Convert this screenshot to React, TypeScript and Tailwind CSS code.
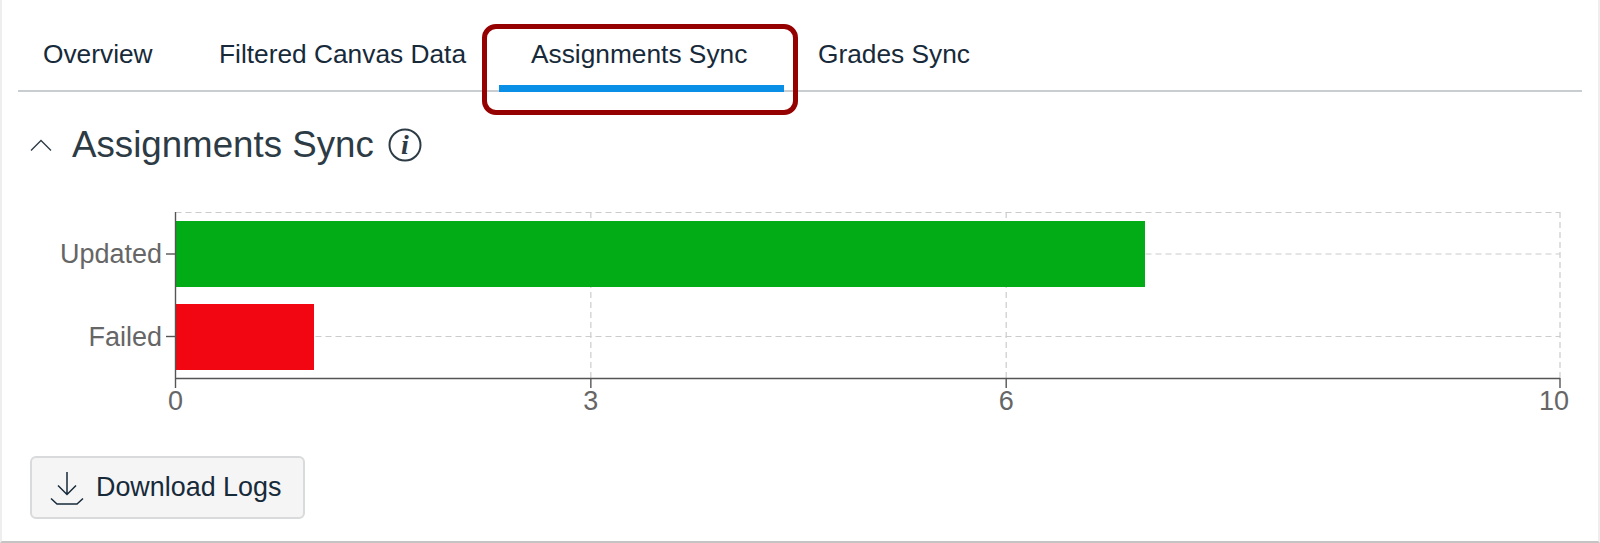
const fontStack = { fontFamily: '"Liberation Sans", Arial, sans-serif' };

const tabs = [
  { label: 'Overview', className: 'w-[201px] pl-[25px]' },
  { label: 'Filtered Canvas Data', className: 'w-[312px]' },
  { label: 'Assignments Sync', className: 'w-[287px]' },
  { label: 'Grades Sync', className: '' },
];

// x position of a value on the 0-10 axis
const xAt = (value: number) => 175.5 + value * 138.45;

function SyncChart() {
  const ticks = [0, 3, 6, 10];
  return (
    <svg width="1600" height="226" viewBox="0 200 1600 226" className="block">
      <g stroke="#cccccc" strokeWidth="1.2" strokeDasharray="6 4" fill="none">
        <line x1="175.5" y1="212.5" x2="1560" y2="212.5" />
        <line x1="175.5" y1="254" x2="1560" y2="254" />
        <line x1="175.5" y1="336.5" x2="1560" y2="336.5" />
        <line x1={xAt(3)} y1="212" x2={xAt(3)} y2="378" />
        <line x1={xAt(6)} y1="212" x2={xAt(6)} y2="378" />
        <line x1="1560" y1="212" x2="1560" y2="378" />
      </g>
      <rect x="175" y="221" width="970" height="66" fill="#02ac17" />
      <rect x="175" y="304" width="139" height="66" fill="#f20612" />
      <g stroke="#555555" strokeWidth="1.4" fill="none">
        <line x1="175.5" y1="212" x2="175.5" y2="388" />
        <line x1="175" y1="378.5" x2="1560" y2="378.5" />
        <line x1="1560" y1="378" x2="1560" y2="388" />
        <line x1={xAt(3)} y1="378" x2={xAt(3)} y2="388" />
        <line x1={xAt(6)} y1="378" x2={xAt(6)} y2="388" />
        <line x1="166" y1="254" x2="175" y2="254" />
        <line x1="166" y1="336.5" x2="175" y2="336.5" />
      </g>
      <g fill="#666666" fontSize="27" style={fontStack}>
        <text x="162" y="263" textAnchor="end">Updated</text>
        <text x="162" y="346" textAnchor="end">Failed</text>
        {ticks.map((tick) => (
          <text key={tick} x={tick === 10 ? 1569 : xAt(tick)} y="410" textAnchor={tick === 10 ? 'end' : 'middle'}>
            {tick}
          </text>
        ))}
      </g>
    </svg>
  );
}

export default function App() {
  return (
    <div
      className="relative h-[543px] w-[1600px] overflow-hidden border-x-2 border-b-2 border-x-[#eeeeee] border-b-[#c4c4c4] bg-white text-[#172a3a]"
      style={fontStack}
    >
      <nav className="mx-[16px] flex h-[92px] border-b-2 border-[#c7cdd1] pt-[36px] text-[26.3px] leading-[36px]">
        {tabs.map((tab) => (
          <div key={tab.label} className={tab.className}>
            {tab.label}
          </div>
        ))}
      </nav>

      <div className="absolute left-[480px] top-[24px] h-[91px] w-[316px] rounded-[14px] border-[5px] border-[#950000]">
        <div className="absolute bottom-[18px] left-[12px] h-[7px] w-[285px] bg-[#0a8fe6]" />
      </div>

      <div className="mt-[28px] flex h-[50px] items-center pl-[28px]">
        <svg width="22" height="14" viewBox="0 0 22 14" fill="none" stroke="#2d3b45" strokeWidth="1.3">
          <path d="M1 12.5 11 2.5l10 10" />
        </svg>
        <h2 className="ml-[20px] text-[36.7px] font-normal leading-[50px] text-[#2d3b45]">Assignments Sync</h2>
        <svg width="34" height="34" viewBox="0 0 34 34" className="ml-[14px]">
          <circle cx="17" cy="17" r="15.5" fill="none" stroke="#2d3b45" strokeWidth="2" />
          <text x="17" y="26" textAnchor="middle" fontSize="28" fontStyle="italic" fontWeight="700" fill="#2d3b45" fontFamily='"Liberation Serif", serif'>
            i
          </text>
        </svg>
      </div>

      <div className="-ml-[2px] mt-[30px]">
        <SyncChart />
      </div>

      <button
        type="button"
        className="ml-[28px] mt-[30px] flex h-[63px] w-[275px] items-center rounded-[6px] border-2 border-[#d8dadb] bg-[#f5f5f5] pl-[18px] text-[26.9px] text-[#172a3a]"
      >
        <svg width="34" height="34" viewBox="0 0 34 34" fill="none" stroke="#172a3a" strokeWidth="1.5">
          <path d="M17 1v22M8 14.5l9 9 9-9" />
          <path d="M1 27.5 7 33h20l6-5.5" />
        </svg>
        <span className="ml-[12px]">Download Logs</span>
      </button>
    </div>
  );
}
